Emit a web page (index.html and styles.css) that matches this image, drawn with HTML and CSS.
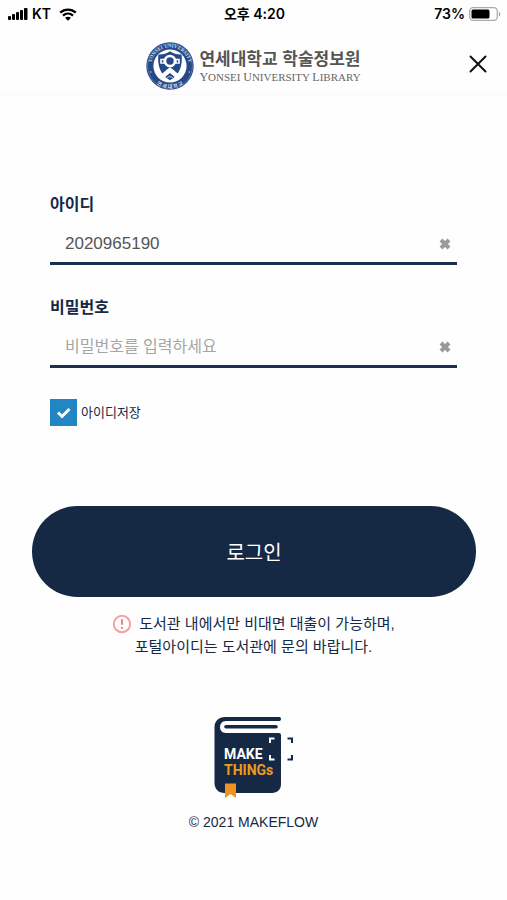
FILE: index.html
```
<!DOCTYPE html>
<html lang="ko">
<head>
    <meta charset="UTF-8">
    <meta name="viewport" content="width=device-width, initial-scale=1.0">
    <title>연세대학교 학술정보원</title>
    <link rel="stylesheet" href="styles.css">
</head>
<body>

    <div class="status-bar">
        <div class="status-left">
            <svg class="signal" viewBox="0 0 20 12" width="20" height="12">
                <rect x="0" y="8" width="3" height="4" rx="1" />
                <rect x="4" y="6" width="3" height="6" rx="1" />
                <rect x="8" y="4" width="3" height="8" rx="1" />
                <rect x="12" y="2" width="3" height="10" rx="1" />
                <rect x="16" y="0" width="3.5" height="12" rx="1" />
            </svg>
            <span>KT</span>
            <svg class="wifi" viewBox="0 0 18 13" width="18" height="13">
                <path d="M1.2 4.6C5.6.5 12.4.5 16.8 4.6M4 7.6c2.9-2.6 7.1-2.6 10 0" fill="none" stroke="#000" stroke-width="2.3" />
                <path d="M6 9.8c1.8-1.5 4.2-1.5 6 0l-3 3z" />
            </svg>
        </div>
        <div class="status-time">오후 4:20</div>
        <div class="status-right">
            <span>73%</span>
            <svg viewBox="0 0 32 14" width="32" height="14">
                <rect x="0.7" y="0.7" width="27.6" height="12.6" rx="3.5" fill="#fff" stroke="#aaa" stroke-width="1.3" />
                <rect x="2.5" y="2.5" width="18" height="9" rx="1.5" />
                <path d="M30 4.7c1.6.6 1.6 4 0 4.6z" fill="#999" />
            </svg>
        </div>
    </div>

    <header>
        <a class="logo" href="#">
            <!-- University emblem -->
            <svg viewBox="0 0 48 48" width="48" height="48">
                <defs>
                    <path id="ring-top" d="M5.6 28A18.8 18.8 0 1 1 42.4 28" />
                    <path id="ring-bottom" d="M3 31A22 22 0 0 0 45 31" />
                </defs>
                <circle cx="24" cy="24" r="23.7" fill="#254987" />
                <circle cx="24" cy="24" r="22.4" fill="none" stroke="#8ba0c5" stroke-width="0.5" />
                <circle cx="24" cy="24" r="16.6" fill="#fff" />
                <text class="ring-text"><textPath href="#ring-top" startOffset="50%">YONSEI UNIVERSITY</textPath></text>
                <text class="ring-text ring-korean"><textPath href="#ring-bottom" startOffset="50%">연 세 대 학 교</textPath></text>
                <circle cx="4.8" cy="30" r="0.7" fill="#d7dfed" />
                <circle cx="43.2" cy="30" r="0.7" fill="#d7dfed" />
                <path d="M24 9.2c3.800 2.900 7.800 3.400 11.600 3.200 1.100 10-1.200 20-11.600 25.800-10.400-5.800-12.700-15.800-11.600-25.800 3.800.2 7.800-.3 11.600-3.200z" fill="#254987" />
                <path d="M14.200 16.800h5v5h-5zM28.800 16.800h5v5h-5z" fill="#fff" />
                <path d="M15.800 18.200h1.600v2.200h-1.600zM30.600 18.200h1.600v2.200h-1.600z" fill="#254987" />
                <circle cx="24" cy="19" r="5" fill="#254987" stroke="#fff" stroke-width="2.600" />
                <path d="M24 25l9.500 8-3.500 3-6-5-6 5-3.500-3z" fill="#fff" />
                <path d="M20.800 36.200q3.200-3.200 6.400 0" fill="none" stroke="#fff" stroke-width="0.7" />
            </svg>
            <span class="logo-text">
                <span class="logo-title">연세대학교 학술정보원</span>
                <span class="logo-subtitle"><b>Y</b>ONSEI <b>U</b>NIVERSITY <b>L</b>IBRARY</span>
            </span>
        </a>
        <button class="close-button" type="button" aria-label="닫기">
            <svg viewBox="0 0 18 18" width="18" height="18">
                <path d="M1.5 1.5l15 15M16.5 1.5l-15 15" fill="none" stroke="#111" stroke-width="2" stroke-linecap="round" />
            </svg>
        </button>
    </header>

    <main>
        <form class="login-form">
            <div class="fields">
                <label class="field-label" for="user-id">아이디</label>
                <div class="input-container">
                    <input type="text" id="user-id" value="2020965190">
                    <button class="clear-button" type="button" aria-label="아이디 지우기">
                        <svg viewBox="0 0 12 12" width="12" height="12"><path d="M2 2l8 8M10 2l-8 8" /></svg>
                    </button>
                </div>

                <label class="field-label" for="user-password">비밀번호</label>
                <div class="input-container">
                    <input type="password" id="user-password" placeholder="비밀번호를 입력하세요">
                    <button class="clear-button" type="button" aria-label="비밀번호 지우기">
                        <svg viewBox="0 0 12 12" width="12" height="12"><path d="M2 2l8 8M10 2l-8 8" /></svg>
                    </button>
                </div>

                <div class="save-id">
                    <span class="check-wrap">
                        <input type="checkbox" id="save-id" checked>
                        <svg class="check-mark" viewBox="0 0 27 27" width="27" height="27"><path d="M8 13.5l4 4 7.5-7.5" /></svg>
                    </span>
                    <label for="save-id">아이디저장</label>
                </div>
            </div>

            <button class="login-button" type="submit">로그인</button>
        </form>

        <p class="notice">
            <span class="notice-line">
                <svg viewBox="0 0 20 20" width="20" height="20">
                    <circle cx="10" cy="10" r="8.2" fill="none" stroke="#f5a0a2" stroke-width="2" />
                    <path d="M10 5.2v5.6M10 13v1.8" stroke="#f07f83" stroke-width="2" />
                </svg>
                도서관 내에서만 비대면 대출이 가능하며,
            </span>
            <span class="notice-line">포털아이디는 도서관에 문의 바랍니다.</span>
        </p>
    </main>

    <footer>
        <!-- MAKE THINGs book logo -->
        <svg class="book" viewBox="0 0 80 83" width="80" height="83">
            <path d="M66 1H11C5 1 .5 5 .5 11v56c0 6 4 10 10 10H58c5.500 0 9-3.500 9-9V19q0-2-2-2H12c-8 0-8-12 0-12h54q2-2 0-4z" fill="#152945" />
            <path d="M12 10.800h50" fill="none" stroke="#152945" stroke-width="3.600" stroke-linecap="round" />
            <path d="M11 67.500h11V82l-5.500-4L11 82z" fill="#ee9220" />
            <text class="book-text" x="10" y="43" fill="#fff">MAKE</text>
            <text class="book-text" x="10" y="59" fill="#f09a1c">THINGs</text>
            <path d="M56 27v-4.500h4.500M56 39v4.500h4.500" fill="none" stroke="#fff" stroke-width="2" />
            <path d="M73.500 22.500H78V27M73.500 43.500H78V39" fill="none" stroke="#152945" stroke-width="2" />
        </svg>
        <p class="copyright">© 2021 MAKEFLOW</p>
    </footer>

</body>
</html>
```

FILE: styles.css
```
* {
    box-sizing: border-box;
}

body {
    font-family: "Liberation Sans", "Noto Sans CJK KR", sans-serif;
    background-color: #fefefe;
    color: #152945;
    margin: 0;
}

button {
    border: none;
    background: none;
    padding: 0;
    cursor: pointer;
    font-family: inherit;
}

svg {
    display: block;
    flex-shrink: 0;
}

.status-bar {
    display: grid;
    grid-template-columns: 1fr auto 1fr;
    align-items: center;
    height: 28px;
    padding: 0 6px 0 8px;
    font-family: Inter, "Noto Sans CJK KR", sans-serif;
    font-size: 14px;
    font-weight: 600;
    line-height: 20px;
    color: #000;
}

.status-left,
.status-right {
    display: flex;
    align-items: center;
    gap: 4px;
}

.wifi {
    margin-left: 4px;
}

.status-right {
    justify-content: flex-end;
}

header {
    position: relative;
    display: flex;
    justify-content: center;
    align-items: center;
    height: 67px;
    padding-top: 10px;
    border-bottom: 1px solid #f8f8f8;
}

.logo {
    display: flex;
    align-items: center;
    gap: 5px;
    color: #555;
    text-decoration: none;
}

.logo-text {
    display: flex;
    flex-direction: column;
}

.logo-title {
    font-size: 17px;
    font-weight: 700;
    line-height: 23px;
}

.logo-subtitle {
    font-family: "Liberation Serif", serif;
    font-size: 11px;
    line-height: 13px;
    color: #666;
}

.logo-subtitle b {
    font-size: 12px;
    font-weight: 400;
}

.ring-text {
    font-family: "Liberation Serif", serif;
    font-size: 5px;
    font-weight: 700;
    fill: #d7dfed;
    text-anchor: middle;
}

.ring-korean {
    font-family: "Noto Sans CJK KR", sans-serif;
}

/* Sits over the right end of the header so the logo stays centered */
.close-button {
    position: absolute;
    top: 27px;
    right: 20px;
}

.fields {
    padding: 98px 50px 0;
}

.field-label {
    display: block;
    font-size: 16px;
    font-weight: 700;
    line-height: 24px;
}

.input-container {
    display: flex;
    align-items: center;
    height: 48px;
    padding: 8px 6px 0 15px;
    margin-bottom: 31px;
    border-bottom: 3px solid #1c2f50;
}

.input-container input {
    flex: 1;
    min-width: 0;
    padding: 0;
    border: none;
    outline: none;
    background: none;
    font-family: inherit;
    font-size: 17px;
    line-height: 24px;
    color: #555;
}

.input-container input::placeholder {
    font-size: 16px;
    color: #a5a5a5;
}

.clear-button path {
    fill: none;
    stroke: #999;
    stroke-width: 4;
}

.save-id {
    display: flex;
    align-items: center;
    gap: 4px;
    font-size: 13px;
    line-height: 20px;
}

.check-wrap {
    display: grid;
}

.check-wrap input,
.check-mark {
    grid-area: 1 / 1;
}

.check-wrap input {
    appearance: none;
    width: 27px;
    height: 27px;
    margin: 0;
    border: 1px solid #2386c4;
}

.check-wrap input:checked {
    background-color: #2386c4;
}

.check-mark {
    pointer-events: none;
    visibility: hidden;
}

.check-wrap input:checked + .check-mark {
    visibility: visible;
}

.check-mark path {
    fill: none;
    stroke: #fff;
    stroke-width: 3;
}

.login-form {
    display: flex;
    flex-direction: column;
}

.login-button {
    height: 91px;
    margin: 80px 31px 0 32px;
    border-radius: 46px;
    background-color: #152945;
    color: #fff;
    font-size: 20px;
}

.notice {
    margin: 15px 0 0;
    font-size: 15px;
    line-height: 23px;
}

.notice-line {
    display: flex;
    justify-content: center;
    align-items: center;
    gap: 7px;
}

footer {
    display: flex;
    flex-direction: column;
    align-items: center;
    padding-top: 58px;
}

.book-text {
    font-family: Roboto, sans-serif;
    font-size: 14px;
    font-weight: 700;
}

.copyright {
    margin: 13px 0 0;
    font-size: 14px;
    line-height: 20px;
}
```
